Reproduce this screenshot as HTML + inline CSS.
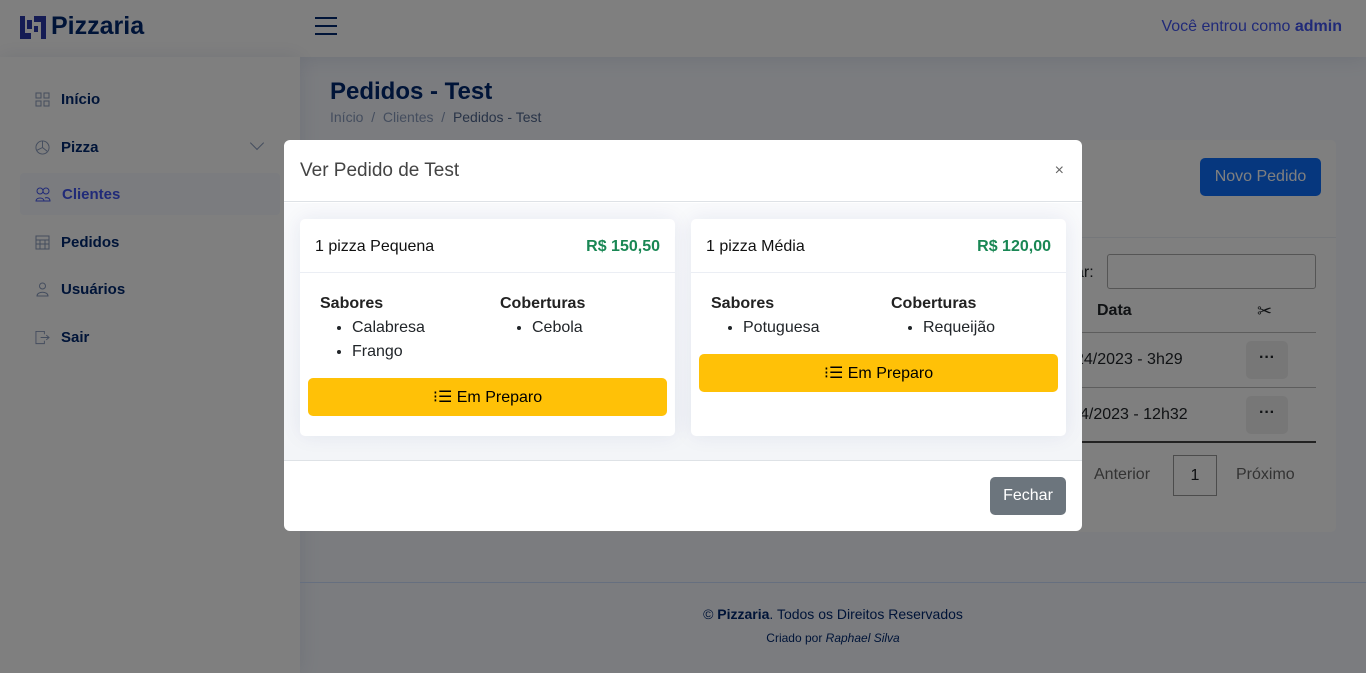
<!DOCTYPE html>
<html><head><meta charset="utf-8"><style>
*{box-sizing:border-box;margin:0;padding:0}
body{width:1366px;height:673px;overflow:hidden;position:relative;background:#f6f9ff;font-family:"Liberation Sans",sans-serif;color:#212529}
.abs{position:absolute}
.hdr{left:0;top:0;width:1366px;height:57px;background:#fff;box-shadow:0 2px 20px rgba(1,41,112,.1)}
.side{left:0;top:57px;width:300px;height:616px;background:#fff;box-shadow:0 0 20px rgba(1,41,112,.1)}
.nav{position:absolute;left:20px;width:260px;height:42px;font-size:15px;font-weight:bold;color:#012970;display:flex;align-items:center;padding-left:15px;border-radius:4px}
.nav svg{margin-right:11px}
.card{left:320px;top:140px;width:1016px;height:392px;background:#fff;border-radius:5px}
.ov{left:0;top:0;width:1366px;height:673px;background:rgba(0,0,0,.5)}
.modal{left:284px;top:140px;width:798px;height:391px;background:#fff;border-radius:6px;overflow:hidden}
.pc{position:absolute;top:79px;width:375px;height:217px;background:#fff;border-radius:5px;box-shadow:0 0 20px rgba(1,41,112,.08)}
.pch{height:54px;border-bottom:1px solid #ebeef4;display:flex;justify-content:space-between;align-items:center;padding:0 15px;font-size:16px;padding-top:2px}
.pch span{color:#111}
.pch b{color:#198754}
.col{position:absolute;top:73px;font-size:16px;line-height:24px}
.col h4{font-size:16px;font-weight:bold;color:#222}
.col ul{padding-left:32px}
.btnw{position:absolute;left:8px;width:359px;height:38px;background:#ffc107;border-radius:5px;display:flex;align-items:center;justify-content:center;font-size:16px;color:#000}
</style></head><body>
<div class="abs hdr">
 <svg class="abs" style="left:20px;top:15px" width="26" height="24" viewBox="0 0 26 24"><path d="M0 1h5v17h6v6H0z M7 5h5v9H7z M14 1h12v23h-5V7h-7z M14 11h4v6h-4z" fill="#2a38a8"/></svg>
 <div class="abs" style="left:51px;top:12px;font-size:25px;font-weight:bold;color:#012970">Pizzaria</div>
 <div class="abs" style="left:315px;top:17px;width:22px;height:2px;background:#012970;box-shadow:0 8px 0 #012970,0 16px 0 #012970"></div>
 <div class="abs" style="right:24px;top:18px;font-size:16px;color:#4154f1">Você entrou como <b>admin</b></div>
</div>
<div class="abs side">
 <div class="nav" style="top:21px"><svg width="15" height="15" viewBox="0 0 15 15" fill="none" stroke="#899bbd"><rect x="1" y="1" width="5" height="5"/><rect x="9" y="1" width="5" height="5"/><rect x="1" y="9" width="5" height="5"/><rect x="9" y="9" width="5" height="5"/></svg>Início</div>
 <div class="nav" style="top:69px"><svg width="15" height="15" viewBox="0 0 16 16" fill="none" stroke="#899bbd"><circle cx="8" cy="8" r="7"/><path d="M8 1v7l5 4M8 8l-6 3"/></svg>Pizza<span style="position:absolute;right:18px;top:12px;width:10px;height:10px;border-right:1px solid #899bbd;border-bottom:1px solid #899bbd;transform:rotate(45deg)"></span></div>
 <div class="nav" style="top:116px;background:#f6f9ff;color:#4154f1"><svg width="16" height="15" viewBox="0 0 16 15" fill="none" stroke="#4154f1"><circle cx="5" cy="4" r="3"/><circle cx="11" cy="4" r="3"/><path d="M1 14c0-4 8-4 8 0zM9 14h6c0-3-3-4-5-3"/></svg>Clientes</div>
 <div class="nav" style="top:164px"><svg width="15" height="15" viewBox="0 0 15 15" fill="none" stroke="#899bbd"><rect x="1" y="1" width="13" height="13"/><path d="M1 5h13M1 9h13M5 5v9M10 5v9"/></svg>Pedidos</div>
 <div class="nav" style="top:211px"><svg width="15" height="15" viewBox="0 0 15 15" fill="none" stroke="#899bbd"><circle cx="7.5" cy="4" r="3"/><path d="M2 14c0-5 11-5 11 0z"/></svg>Usuários</div>
 <div class="nav" style="top:259px"><svg width="15" height="15" viewBox="0 0 16 15" fill="none" stroke="#899bbd"><path d="M10 4V1H1v13h9v-3M6 7.5h9M12 5l3 2.5-3 2.5"/></svg>Sair</div>
</div>
<div class="abs" style="left:330px;top:78px;font-size:24px;font-weight:bold;color:#012970">Pedidos - Test</div>
<div class="abs" style="left:330px;top:109px;font-size:14px;color:#899bbd">Início &nbsp;/&nbsp; Clientes &nbsp;/&nbsp; <span style="color:#51678f">Pedidos - Test</span></div>
<div class="abs card">
 <div class="abs" style="left:880px;top:18px;width:121px;height:38px;background:#0d6efd;border-radius:5px;color:#fff;font-size:16px;display:flex;align-items:center;justify-content:center">Novo Pedido</div>
 <div class="abs" style="left:0;top:97px;width:1016px;border-top:1px solid #ebeef4"></div>
 <div class="abs" style="left:755px;top:124px;font-size:16px">ar:</div>
 <div class="abs" style="left:787px;top:114px;width:209px;height:35px;border:1px solid #aaa;border-radius:3px"></div>
 <div class="abs" style="left:777px;top:162px;font-size:16px;font-weight:bold">Data</div>
 <div class="abs" style="left:937px;top:161px;font-size:18px">✂</div>
 <div class="abs" style="left:740px;top:192px;width:256px;border-top:1px solid #bbb"></div>
 <div class="abs" style="left:755px;top:211px;font-size:16px">24/2023 - 3h29</div>
 <div class="abs" style="left:926px;top:201px;width:42px;height:38px;background:#eee;border-radius:5px;text-align:center;font-weight:bold;line-height:34px">···</div>
 <div class="abs" style="left:740px;top:247px;width:256px;border-top:1px solid #bbb"></div>
 <div class="abs" style="left:760px;top:266px;font-size:16px">4/2023 - 12h32</div>
 <div class="abs" style="left:926px;top:256px;width:42px;height:38px;background:#eee;border-radius:5px;text-align:center;font-weight:bold;line-height:34px">···</div>
 <div class="abs" style="left:740px;top:301px;width:256px;border-top:2px solid #444"></div>
 <div class="abs" style="left:774px;top:326px;font-size:16px;color:#666">Anterior</div>
 <div class="abs" style="left:853px;top:315px;width:44px;height:41px;border:1px solid #999;font-size:16px;text-align:center;line-height:39px">1</div>
 <div class="abs" style="left:916px;top:326px;font-size:16px;color:#666">Próximo</div>
</div>
<div class="abs" style="left:300px;top:582px;width:1066px;border-top:1px solid #cddfff"></div>
<div class="abs" style="left:300px;top:606px;width:1066px;text-align:center;font-size:14px;color:#012970">© <b>Pizzaria</b>. Todos os Direitos Reservados</div>
<div class="abs" style="left:300px;top:631px;width:1066px;text-align:center;font-size:12px;color:#012970">Criado por <i>Raphael Silva</i></div>
<div class="abs ov"></div>
<div class="abs modal">
 <div style="height:62px;border-bottom:1px solid #dee2e6;padding:20px 16px;font-size:19px;color:#444">Ver Pedido de Test<span style="position:absolute;right:18px;top:22px;font-size:16px;color:#666">×</span></div>
 <div class="abs" style="left:0;top:63px;width:798px;height:257px;background:linear-gradient(#f9fafc,#f3f5f8)"></div>
 <div class="pc" style="left:16px">
  <div class="pch"><span>1 pizza Pequena</span><b>R$ 150,50</b></div>
  <div class="col" style="left:20px"><h4>Sabores</h4><ul><li>Calabresa</li><li>Frango</li></ul></div>
  <div class="col" style="left:200px"><h4>Coberturas</h4><ul><li>Cebola</li></ul></div>
  <div class="btnw" style="top:159px">⁝☰ Em Preparo</div>
 </div>
 <div class="pc" style="left:407px">
  <div class="pch"><span>1 pizza Média</span><b>R$ 120,00</b></div>
  <div class="col" style="left:20px"><h4>Sabores</h4><ul><li>Potuguesa</li></ul></div>
  <div class="col" style="left:200px"><h4>Coberturas</h4><ul><li>Requeijão</li></ul></div>
  <div class="btnw" style="top:135px">⁝☰ Em Preparo</div>
 </div>
 <div class="abs" style="left:0;top:320px;width:798px;border-top:1px solid #dee2e6"></div>
 <div class="abs" style="left:706px;top:337px;width:76px;height:38px;background:#6c757d;border-radius:5px;color:#fff;font-size:16px;display:flex;align-items:center;justify-content:center">Fechar</div>
</div>
</body></html>
